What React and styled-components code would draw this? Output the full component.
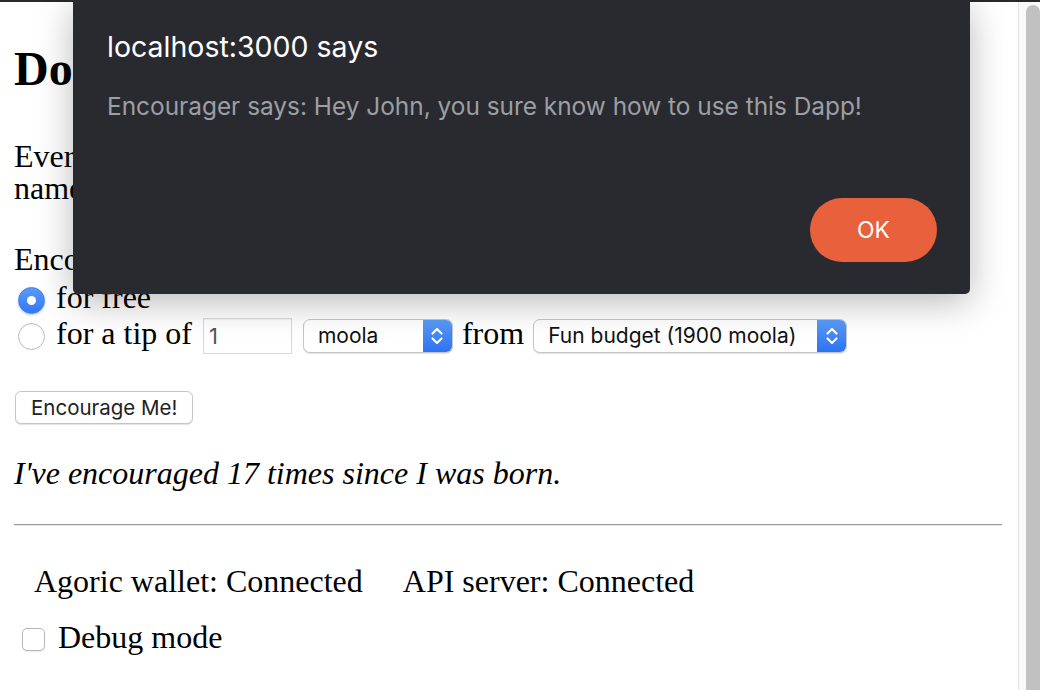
import React from 'react';
import styled, { createGlobalStyle } from 'styled-components';

const GlobalStyle = createGlobalStyle`
  html, body {
    margin: 0;
    padding: 0;
    background: #fff;
  }
  body {
    font-family: 'Liberation Serif', 'Times New Roman', serif;
    font-size: 32px;
    line-height: 32px;
    color: #000;
    overflow: hidden;
  }
`;

const Window = styled.div`
  position: relative;
  width: 1040px;
  height: 690px;
  display: flex;
  flex-direction: column;
  overflow: hidden;
`;

const ChromeEdge = styled.div`
  height: 2px;
  flex-shrink: 0;
  background: #27282c;
`;

const Viewport = styled.div`
  flex: 1;
  display: flex;
  min-height: 0;
`;

const Page = styled.main`
  flex: 1;
  padding: 0 14px;
`;

const Scrollbar = styled.div`
  width: 14px;
  display: flex;
  padding: 3px 0 0 7px;
  border-left: 1px solid #e4e4e4;
  background: #fafafa;
`;

const Thumb = styled.div`
  flex: 1;
  background: #c1c1c1;
  border-radius: 7px 7px 0 0;
`;

const Title = styled.h2`
  margin: 41px 0 0;
  font-size: 48px;
  line-height: 52px;
  font-weight: bold;
  white-space: nowrap;
`;

const Para = styled.p`
  margin: ${p => p.gap || 0}px 0 0;
  font-style: ${p => (p.italic ? 'italic' : 'normal')};
`;

const Choice = styled.div`
  display: flex;
  align-items: center;
  height: 36px;
  margin-top: ${p => p.gap || 0}px;
`;

const Radio = styled.span`
  box-sizing: border-box;
  width: 27px;
  height: 27px;
  margin: 0 11px 0 4px;
  border-radius: 50%;
  display: flex;
  align-items: center;
  justify-content: center;
  flex-shrink: 0;
  background: ${p => (p.checked ? 'linear-gradient(#5a9bf8, #3478f6)' : '#fff')};
  border: 1px solid ${p => (p.checked ? '#3a7df3' : '#b9b9b9')};
  box-shadow: ${p => (p.checked ? '0 1px 2px rgba(40,90,200,0.35)' : 'inset 0 1px 1px rgba(0,0,0,0.06)')};
  &::after {
    content: '';
    display: ${p => (p.checked ? 'block' : 'none')};
    width: 9px;
    height: 9px;
    border-radius: 50%;
    background: #fff;
  }
`;

const Label = styled.span`
  padding-bottom: 7px;
  white-space: nowrap;
`;

const TipInput = styled.div`
  box-sizing: border-box;
  width: 89px;
  height: 36px;
  margin: 0 11px 0 11px;
  padding: 0 5px;
  border: 1px solid #d9d9d9;
  box-shadow: inset 0 1px 1px rgba(0,0,0,0.05);
  font-family: 'Inter', 'Liberation Sans', sans-serif;
  font-size: 22px;
  line-height: 34px;
  color: #555;
`;

const SelectBox = styled.div`
  box-sizing: border-box;
  width: ${p => p.width}px;
  height: 34px;
  display: flex;
  flex-shrink: 0;
  margin-left: ${p => p.left || 0}px;
  border: 1px solid #c6c6c6;
  border-radius: 7px;
  background: #fff;
  box-shadow: 0 1px 1px rgba(0,0,0,0.12);
  overflow: hidden;
`;

const SelectValue = styled.span`
  flex: 1;
  padding-left: 14px;
  font-family: 'Inter', 'Liberation Sans', sans-serif;
  font-size: 21px;
  line-height: 32px;
  color: #111;
  white-space: nowrap;
`;

const Stepper = styled.span`
  width: 29px;
  display: flex;
  align-items: center;
  justify-content: center;
  background: linear-gradient(#5b9cf8, #2d72f2);
`;

const Word = styled.span`
  margin-left: 9px;
  padding-bottom: 7px;
`;

const Button = styled.button`
  display: block;
  box-sizing: border-box;
  margin: 37px 0 0 1px;
  height: 33px;
  padding: 0 15px;
  border: 1px solid #c4c4c4;
  border-radius: 6px;
  background: #fff;
  box-shadow: 0 1px 1px rgba(0,0,0,0.12);
  font-family: 'Inter', 'Liberation Sans', sans-serif;
  font-size: 20.5px;
  color: #222;
`;

const Rule = styled.hr`
  margin: 35px 2px 0 0;
  height: 0;
  border: none;
  border-top: 1px solid #9b9b9b;
  border-bottom: 1px solid #e6e6e6;
`;

const StatusRow = styled.div`
  display: flex;
  margin-top: 39px;
`;

const StatusItem = styled.span`
  padding: 0 20px;
  white-space: nowrap;
`;

const DebugRow = styled.label`
  display: flex;
  align-items: center;
  height: 36px;
  margin-top: 24px;
`;

const Checkbox = styled.span`
  box-sizing: border-box;
  width: 23px;
  height: 23px;
  margin: 0 13px 0 8px;
  border: 1px solid #b5b5b5;
  border-radius: 5px;
  background: #fff;
  box-shadow: 0 1px 1px rgba(0,0,0,0.08);
`;

const DebugText = styled.span`
  padding-bottom: 4px;
`;

const Dialog = styled.div`
  position: absolute;
  top: 0;
  left: 73px;
  width: 897px;
  height: 294px;
  box-sizing: border-box;
  padding: 30px 33px 32px 34px;
  display: flex;
  flex-direction: column;
  background: #292a2f;
  border-radius: 0 0 5px 5px;
  box-shadow: 0 8px 36px rgba(0,0,0,0.28);
  font-family: 'Inter', 'Liberation Sans', sans-serif;
`;

const DialogTitle = styled.div`
  font-size: 28.5px;
  line-height: 34px;
  color: #fff;
`;

const DialogMessage = styled.div`
  margin-top: 27px;
  font-size: 24.4px;
  line-height: 30px;
  color: #9c9fa4;
`;

const OkButton = styled.button`
  margin-top: auto;
  align-self: flex-end;
  width: 127px;
  height: 64px;
  border: none;
  border-radius: 32px;
  background: #e8613c;
  color: #fff;
  font-family: 'Inter', 'Liberation Sans', sans-serif;
  font-size: 23px;
`;

const Chevrons = () => (
  <svg width="14" height="22" viewBox="0 0 14 22">
    <path d="M2.5 8.5 L7 4 L11.5 8.5 M2.5 13.5 L7 18 L11.5 13.5" fill="none" stroke="#fff" strokeWidth="2.2" strokeLinecap="round" strokeLinejoin="round" />
  </svg>
);

const Select = ({ width, left, value }) => (
  <SelectBox width={width} left={left}>
    <SelectValue>{value}</SelectValue>
    <Stepper>
      <Chevrons />
    </Stepper>
  </SelectBox>
);

export default function App() {
  return (
    <Window>
      <GlobalStyle />
      <ChromeEdge />
      <Viewport>
        <Page>
          <Title>Do you need encouragement?</Title>
          <Para gap={45}>
            Every so often we all need a little encouragement. Tell us your
            <br />
            name and we will send some your way.
          </Para>
          <Para gap={39}>Encourage me:</Para>
          <Choice gap={7}>
            <Radio checked />
            <Label>for free</Label>
          </Choice>
          <Choice>
            <Radio />
            <Label>for a tip of</Label>
            <TipInput>1</TipInput>
            <Select width={150} value="moola" />
            <Word>from</Word>
            <Select width={314} left={9} value="Fun budget (1900 moola)" />
          </Choice>
          <Button>Encourage Me!</Button>
          <Para gap={33} italic>
            I've encouraged 17 times since I was born.
          </Para>
          <Rule />
          <StatusRow>
            <StatusItem>Agoric wallet: Connected</StatusItem>
            <StatusItem>API server: Connected</StatusItem>
          </StatusRow>
          <DebugRow>
            <Checkbox />
            <DebugText>Debug mode</DebugText>
          </DebugRow>
        </Page>
        <Scrollbar>
          <Thumb />
        </Scrollbar>
      </Viewport>
      <Dialog>
        <DialogTitle>localhost:3000 says</DialogTitle>
        <DialogMessage>
          Encourager says: Hey John, you sure know how to use this Dapp!
        </DialogMessage>
        <OkButton>OK</OkButton>
      </Dialog>
    </Window>
  );
}
